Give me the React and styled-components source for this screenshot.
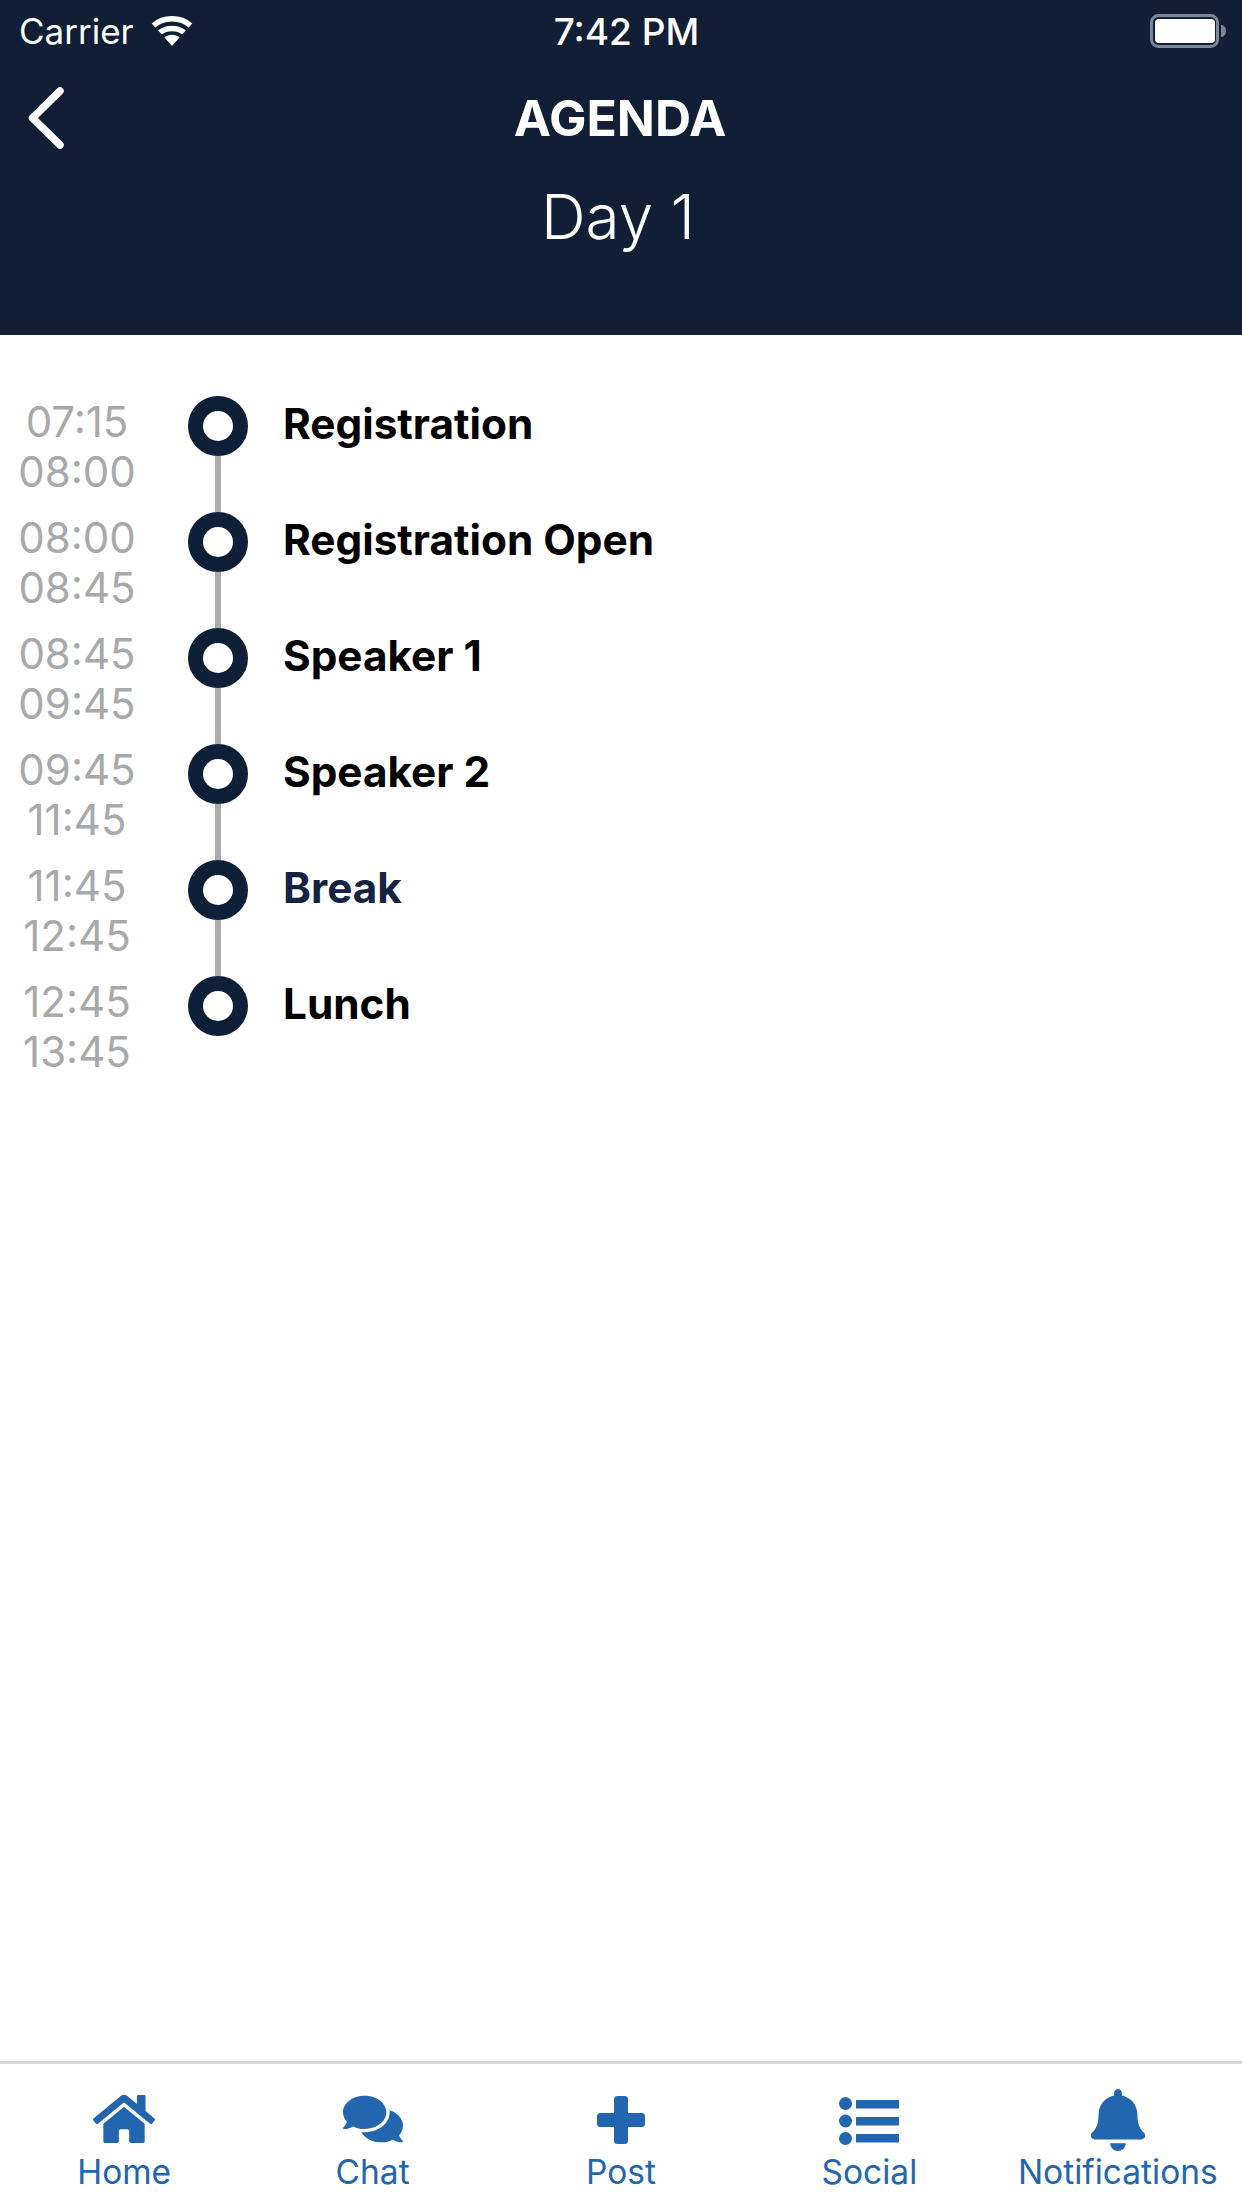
import React from "react";
import styled, { createGlobalStyle } from "styled-components";
import { FaHome, FaComments, FaBell } from "react-icons/fa";

const Global = createGlobalStyle`
  html, body { margin: 0; padding: 0; background: #fff; }
  body { font-family: Inter, "Liberation Sans", sans-serif; }
`;

const Page = styled.div`
  width: 1242px;
  height: 2208px;
  display: flex;
  flex-direction: column;
  background: #fff;
  overflow: hidden;
`;

const Header = styled.header`
  height: 335px;
  flex: none;
  background: #101f36;
  color: #fff;
  display: flex;
  flex-direction: column;
`;

const StatusBar = styled.div`
  height: 62px;
  display: grid;
  grid-template-columns: 1fr auto 1fr;
  align-items: center;
  padding: 0 14px 0 19px;
  font-size: 35px;
  font-weight: 400;
`;

const StatusLeft = styled.div`
  display: flex;
  align-items: center;
  gap: 17px;
`;

const StatusTime = styled.div`
  padding-left: 6px;
  font-size: 37px;
  font-weight: 500;
`;

const StatusRight = styled.div`
  display: flex;
  justify-content: flex-end;
`;

const NavRow = styled.div`
  height: 112px;
  display: grid;
  grid-template-columns: 1fr auto 1fr;
  align-items: center;
  padding: 0 30px 0 28px;
`;

const Title = styled.h1`
  margin: 0;
  font-size: 50px;
  font-weight: 700;
  line-height: 1;
`;

const Subtitle = styled.h2`
  margin: 0;
  text-align: center;
  font-size: 62px;
  font-weight: 350;
  line-height: 76px;
  padding: 5px 6px 0 0;
`;

const List = styled.main`
  flex: 1;
  padding-top: 61px;
`;

const Row = styled.div`
  height: 116px;
  display: flex;
`;

const Times = styled.div`
  width: 154px;
  flex: none;
  margin-right: 34px;
  text-align: center;
  font-size: 42px;
  line-height: 50px;
  color: #a8a9aa;
  padding-top: 1px;
`;

const Node = styled.div`
  width: 60px;
  flex: none;
  display: flex;
  flex-direction: column;
  align-items: center;
`;

const Dot = styled.div`
  width: 60px;
  height: 60px;
  box-sizing: border-box;
  border: 15px solid #0d2038;
  border-radius: 50%;
  background: #fff;
  flex: none;
`;

const Connector = styled.div`
  width: 6px;
  flex: 1;
  background: #a9abae;
`;

const RowTitle = styled.div`
  margin-left: 35px;
  height: 54px;
  display: flex;
  align-items: center;
  font-size: 42.3px;
  font-weight: 700;
  color: ${(p) => (p.$accent ? "#14233f" : "#000")};
`;

const TabBar = styled.nav`
  height: 147px;
  flex: none;
  box-sizing: border-box;
  border-top: 3px solid #d8d8d8;
  display: grid;
  grid-template-columns: repeat(5, 1fr);
`;

const Tab = styled.div`
  display: flex;
  flex-direction: column;
  align-items: center;
  color: #2166ae;
`;

const IconSlot = styled.div`
  height: 92px;
  box-sizing: border-box;
  display: flex;
  align-items: flex-end;
  justify-content: center;
  padding-bottom: ${(p) => p.$lift}px;
`;

const TabLabel = styled.div`
  font-size: 33.5px;
  line-height: 32px;
  white-space: nowrap;
`;

const Wifi = () => (
  <svg width="42" height="30" viewBox="0 0 42 30" fill="none" stroke="#fff" strokeWidth="5.5">
    <path d="M2.5 9.5C12.5 0.5 29.5 0.5 39.5 9.5" />
    <path d="M9 16.5C15 11 27 11 33 16.5" />
    <path d="M21 30L13.5 21.5C17 17.8 25 17.8 28.5 21.5Z" fill="#fff" stroke="none" />
  </svg>
);

const Battery = () => (
  <svg width="78" height="34" viewBox="0 0 78 34">
    <rect x="1.5" y="1.5" width="66" height="31" rx="7" fill="none" stroke="#7c8694" strokeWidth="3" />
    <rect x="5" y="5" width="60" height="24" rx="4" fill="#fff" />
    <path d="M71 11c3 0 5 2.5 5 6s-2 6-5 6z" fill="#7c8694" />
  </svg>
);

const Back = () => (
  <svg width="36" height="62" viewBox="0 0 36 62" fill="none" stroke="#fff" strokeWidth="7.5" strokeLinecap="round" strokeLinejoin="round">
    <path d="M32 4L4.5 31L32 58" />
  </svg>
);

const Plus = () => (
  <svg width="48" height="48" viewBox="0 0 48 48" fill="currentColor">
    <rect x="17" y="0" width="14" height="48" rx="3.5" />
    <rect x="0" y="17" width="48" height="14" rx="3.5" />
  </svg>
);

const ListIcon = () => (
  <svg width="60" height="48" viewBox="0 0 60 48" fill="currentColor">
    <circle cx="6.5" cy="6.5" r="6.5" />
    <circle cx="6.5" cy="24" r="6.5" />
    <circle cx="6.5" cy="41.5" r="6.5" />
    <rect x="17" y="3" width="43" height="8.5" rx="0.5" />
    <rect x="17" y="20" width="43" height="8.5" rx="0.5" />
    <rect x="17" y="37" width="43" height="8.5" rx="0.5" />
  </svg>
);

const rows = [
  ["07:15", "08:00", "Registration"],
  ["08:00", "08:45", "Registration Open"],
  ["08:45", "09:45", "Speaker 1"],
  ["09:45", "11:45", "Speaker 2"],
  ["11:45", "12:45", "Break", true],
  ["12:45", "13:45", "Lunch"],
];

const tabs = [
  ["Home", <FaHome size={62} />, 6],
  ["Chat", <FaComments size={60} />, 7],
  ["Post", <Plus />, 12],
  ["Social", <ListIcon />, 11],
  ["Notifications", <FaBell size={62} />, 5],
];

export default function App() {
  return (
    <Page>
      <Global />
      <Header>
        <StatusBar>
          <StatusLeft>
            <span>Carrier</span>
            <Wifi />
          </StatusLeft>
          <StatusTime>7:42 PM</StatusTime>
          <StatusRight>
            <Battery />
          </StatusRight>
        </StatusBar>
        <NavRow>
          <Back />
          <Title>AGENDA</Title>
        </NavRow>
        <Subtitle>Day 1</Subtitle>
      </Header>
      <List>
        {rows.map(([from, to, title, accent], i) => (
          <Row key={title}>
            <Times>
              {from}
              <br />
              {to}
            </Times>
            <Node>
              <Dot />
              {i < rows.length - 1 && <Connector />}
            </Node>
            <RowTitle $accent={accent}>{title}</RowTitle>
          </Row>
        ))}
      </List>
      <TabBar>
        {tabs.map(([label, icon, lift]) => (
          <Tab key={label}>
            <IconSlot $lift={lift}>{icon}</IconSlot>
            <TabLabel>{label}</TabLabel>
          </Tab>
        ))}
      </TabBar>
    </Page>
  );
}
